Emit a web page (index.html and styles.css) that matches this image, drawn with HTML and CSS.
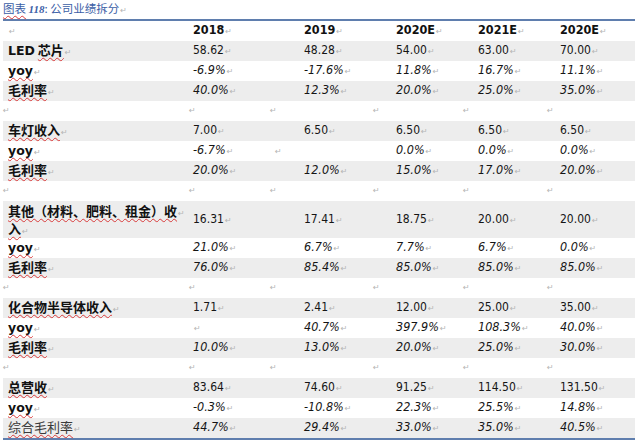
FILE: index.html
```html
<!DOCTYPE html>
<html lang="zh-CN">
<head>
<meta charset="utf-8">
<title>公司业绩拆分</title>
<link rel="stylesheet" href="styles.css">
</head>
<body>
<div class="caption"><span class="wavy">图表</span> <i class="fig">118</i>: 公司业绩拆分<span class="pm">↵</span></div>
<table class="perf">
  <colgroup>
    <col class="c-label"><col class="c-a"><col class="c-b"><col class="c-c"><col class="c-d"><col class="c-e">
  </colgroup>
  <thead>
    <tr><th><span class="pm">↵</span></th><th>2018<span class="pm">↵</span></th><th>2019<span class="pm">↵</span></th><th>2020E<span class="pm">↵</span></th><th>2021E<span class="pm">↵</span></th><th>2020E<span class="pm">↵</span></th></tr>
  </thead>
  <tbody>
    <tr class="shade"><td class="lbl"><span class="lat">LED</span> <span class="wavy">芯片</span><span class="pm">↵</span></td><td>58.62<span class="pm">↵</span></td><td>48.28<span class="pm">↵</span></td><td>54.00<span class="pm">↵</span></td><td>63.00<span class="pm">↵</span></td><td>70.00<span class="pm">↵</span></td></tr>
    <tr><td class="lbl"><span class="lat wavy">yoy</span><span class="pm">↵</span></td><td class="pct">-6.9%<span class="pm">↵</span></td><td class="pct">-17.6%<span class="pm">↵</span></td><td class="pct">11.8%<span class="pm">↵</span></td><td class="pct">16.7%<span class="pm">↵</span></td><td class="pct">11.1%<span class="pm">↵</span></td></tr>
    <tr class="shade"><td class="lbl"><span class="wavy">毛利率</span><span class="pm">↵</span></td><td class="pct">40.0%<span class="pm">↵</span></td><td class="pct">12.3%<span class="pm">↵</span></td><td class="pct">20.0%<span class="pm">↵</span></td><td class="pct">25.0%<span class="pm">↵</span></td><td class="pct">35.0%<span class="pm">↵</span></td></tr>
    <tr class="gap"><td colspan="6"><div class="marks"><span class="pm">↵</span><span class="pm">↵</span><span class="pm">↵</span><span class="pm">↵</span><span class="pm">↵</span><span class="pm">↵</span></div></td></tr>

    <tr class="shade"><td class="lbl"><span class="wavy">车灯收入</span><span class="pm">↵</span></td><td>7.00<span class="pm">↵</span></td><td>6.50<span class="pm">↵</span></td><td>6.50<span class="pm">↵</span></td><td>6.50<span class="pm">↵</span></td><td>6.50<span class="pm">↵</span></td></tr>
    <tr><td class="lbl"><span class="lat wavy">yoy</span><span class="pm">↵</span></td><td class="pct">-6.7%<span class="pm">↵</span></td><td><span class="pm shift">↵</span></td><td class="pct">0.0%<span class="pm">↵</span></td><td class="pct">0.0%<span class="pm">↵</span></td><td class="pct">0.0%<span class="pm">↵</span></td></tr>
    <tr class="shade"><td class="lbl"><span class="wavy">毛利率</span><span class="pm">↵</span></td><td class="pct">20.0%<span class="pm">↵</span></td><td class="pct">12.0%<span class="pm">↵</span></td><td class="pct">15.0%<span class="pm">↵</span></td><td class="pct">17.0%<span class="pm">↵</span></td><td class="pct">20.0%<span class="pm">↵</span></td></tr>
    <tr class="gap"><td colspan="6"><div class="marks"><span class="pm">↵</span><span class="pm">↵</span><span class="pm">↵</span><span class="pm">↵</span><span class="pm">↵</span><span class="pm">↵</span></div></td></tr>

    <tr class="shade tall"><td class="lbl"><span class="line1"><span class="wavy">其他（材料、肥料、租金）收</span><span class="pm">↵</span></span><span class="line2"><span class="wavy">入</span><span class="pm">↵</span></span></td><td>16.31<span class="pm">↵</span></td><td>17.41<span class="pm">↵</span></td><td>18.75<span class="pm">↵</span></td><td>20.00<span class="pm">↵</span></td><td>20.00<span class="pm">↵</span></td></tr>
    <tr><td class="lbl"><span class="lat wavy">yoy</span><span class="pm">↵</span></td><td class="pct">21.0%<span class="pm">↵</span></td><td class="pct">6.7%<span class="pm">↵</span></td><td class="pct">7.7%<span class="pm">↵</span></td><td class="pct">6.7%<span class="pm">↵</span></td><td class="pct">0.0%<span class="pm">↵</span></td></tr>
    <tr class="shade"><td class="lbl"><span class="wavy">毛利率</span><span class="pm">↵</span></td><td class="pct">76.0%<span class="pm">↵</span></td><td class="pct">85.4%<span class="pm">↵</span></td><td class="pct">85.0%<span class="pm">↵</span></td><td class="pct">85.0%<span class="pm">↵</span></td><td class="pct">85.0%<span class="pm">↵</span></td></tr>
    <tr class="gap"><td colspan="6"><div class="marks"><span class="pm">↵</span><span class="pm">↵</span><span class="pm">↵</span><span class="pm">↵</span><span class="pm">↵</span><span class="pm">↵</span></div></td></tr>

    <tr class="shade"><td class="lbl"><span class="wavy">化合物半导体收入</span><span class="pm">↵</span></td><td>1.71<span class="pm">↵</span></td><td>2.41<span class="pm">↵</span></td><td>12.00<span class="pm">↵</span></td><td>25.00<span class="pm">↵</span></td><td>35.00<span class="pm">↵</span></td></tr>
    <tr><td class="lbl"><span class="lat wavy">yoy</span><span class="pm">↵</span></td><td><span class="pm">↵</span></td><td class="pct">40.7%<span class="pm">↵</span></td><td class="pct">397.9%<span class="pm">↵</span></td><td class="pct">108.3%<span class="pm">↵</span></td><td class="pct">40.0%<span class="pm">↵</span></td></tr>
    <tr class="shade"><td class="lbl"><span class="wavy">毛利率</span><span class="pm">↵</span></td><td class="pct">10.0%<span class="pm">↵</span></td><td class="pct">13.0%<span class="pm">↵</span></td><td class="pct">20.0%<span class="pm">↵</span></td><td class="pct">25.0%<span class="pm">↵</span></td><td class="pct">30.0%<span class="pm">↵</span></td></tr>
    <tr class="gap"><td colspan="6"><div class="marks"><span class="pm">↵</span><span class="pm">↵</span><span class="pm">↵</span><span class="pm">↵</span><span class="pm">↵</span><span class="pm">↵</span></div></td></tr>

    <tr class="shade"><td class="lbl"><span class="wavy">总营收</span><span class="pm">↵</span></td><td>83.64<span class="pm">↵</span></td><td>74.60<span class="pm">↵</span></td><td>91.25<span class="pm">↵</span></td><td>114.50<span class="pm">↵</span></td><td>131.50<span class="pm">↵</span></td></tr>
    <tr><td class="lbl"><span class="lat wavy">yoy</span><span class="pm">↵</span></td><td class="pct">-0.3%<span class="pm">↵</span></td><td class="pct">-10.8%<span class="pm">↵</span></td><td class="pct">22.3%<span class="pm">↵</span></td><td class="pct">25.5%<span class="pm">↵</span></td><td class="pct">14.8%<span class="pm">↵</span></td></tr>
    <tr class="shade last"><td class="lbl plain"><span class="wavy">综合毛利率</span><span class="pm">↵</span></td><td class="pct">44.7%<span class="pm">↵</span></td><td class="pct">29.4%<span class="pm">↵</span></td><td class="pct">33.0%<span class="pm">↵</span></td><td class="pct">35.0%<span class="pm">↵</span></td><td class="pct">40.5%<span class="pm">↵</span></td></tr>
  </tbody>
</table>
</body>
</html>
```

FILE: styles.css
```css
html, body {
  margin: 0;
  padding: 0;
  background: #ffffff;
}

body {
  width: 640px;
  height: 440px;
  overflow: hidden;
  font-family: "DejaVu Sans Condensed", "DejaVu Sans", "Noto Sans CJK SC", sans-serif;
  font-stretch: condensed;
  font-size: 12px;
  color: #151515;
}

.caption {
  height: 19px;
  line-height: 17px;
  padding-left: 3px;
  font-family: "Noto Sans CJK SC", sans-serif;
  font-stretch: normal;
  font-size: 11.5px;
  color: #3b5ea6;
}

.caption .fig {
  font-family: "Liberation Serif", serif;
  font-weight: bold;
  font-size: 11px;
}

.wavy {
  text-decoration: underline wavy #d83a3a;
  text-decoration-thickness: 1px;
  text-underline-offset: 2px;
  text-decoration-skip-ink: none;
}

.pm {
  font-family: "DejaVu Sans", sans-serif;
  font-stretch: normal;
  font-style: normal;
  font-weight: normal;
  font-size: 8px;
  color: #b4b4b4;
  margin-left: 1px;
  text-decoration: none;
}

.pm.shift {
  margin-left: -29px;
}

.perf {
  margin-left: 3px;
  width: 632px;
  border-collapse: collapse;
  table-layout: fixed;
  border-top: 2px solid #5f7eae;
}

.c-label { width: 185px; }
.c-a { width: 111px; }
.c-b { width: 92px; }
.c-c { width: 82px; }
.c-d { width: 82px; }
.c-e { width: 80px; }

.perf th,
.perf td {
  height: 20px;
  padding: 0 0 0 5px;
  text-align: left;
  vertical-align: middle;
  white-space: nowrap;
  line-height: 16px;
}

.perf th {
  font-weight: bold;
  font-size: 12.5px;
  color: #111;
}

.perf tr.shade td {
  background: #ededed;
}

.perf tr.tall td {
  height: 37px;
}

.perf tr.last td {
  border-bottom: 2px solid #5f7eae;
}

.perf td.pct {
  font-style: italic;
  font-size: 12.5px;
}

.perf td.lbl {
  font-family: "Noto Sans CJK SC", sans-serif;
  font-stretch: normal;
  font-weight: bold;
  font-size: 13px;
  color: #111;
}

.perf td.lbl .lat {
  font-family: "DejaVu Sans", sans-serif;
  font-size: 12.5px;
}

.perf td.lbl.plain {
  font-weight: normal;
  color: #3a3a3a;
}

.perf td.lbl .line1,
.perf td.lbl .line2 {
  display: flex;
  align-items: baseline;
  width: 178px;
  height: 18px;
  line-height: 18px;
}

.perf tr.gap td {
  padding: 0;
  height: 20px;
}

.marks {
  display: grid;
  grid-template-columns: 186px 81px 103px 90px 84px 1fr;
  height: 20px;
  align-items: center;
}

.marks .pm {
  margin-left: 0;
}
```
